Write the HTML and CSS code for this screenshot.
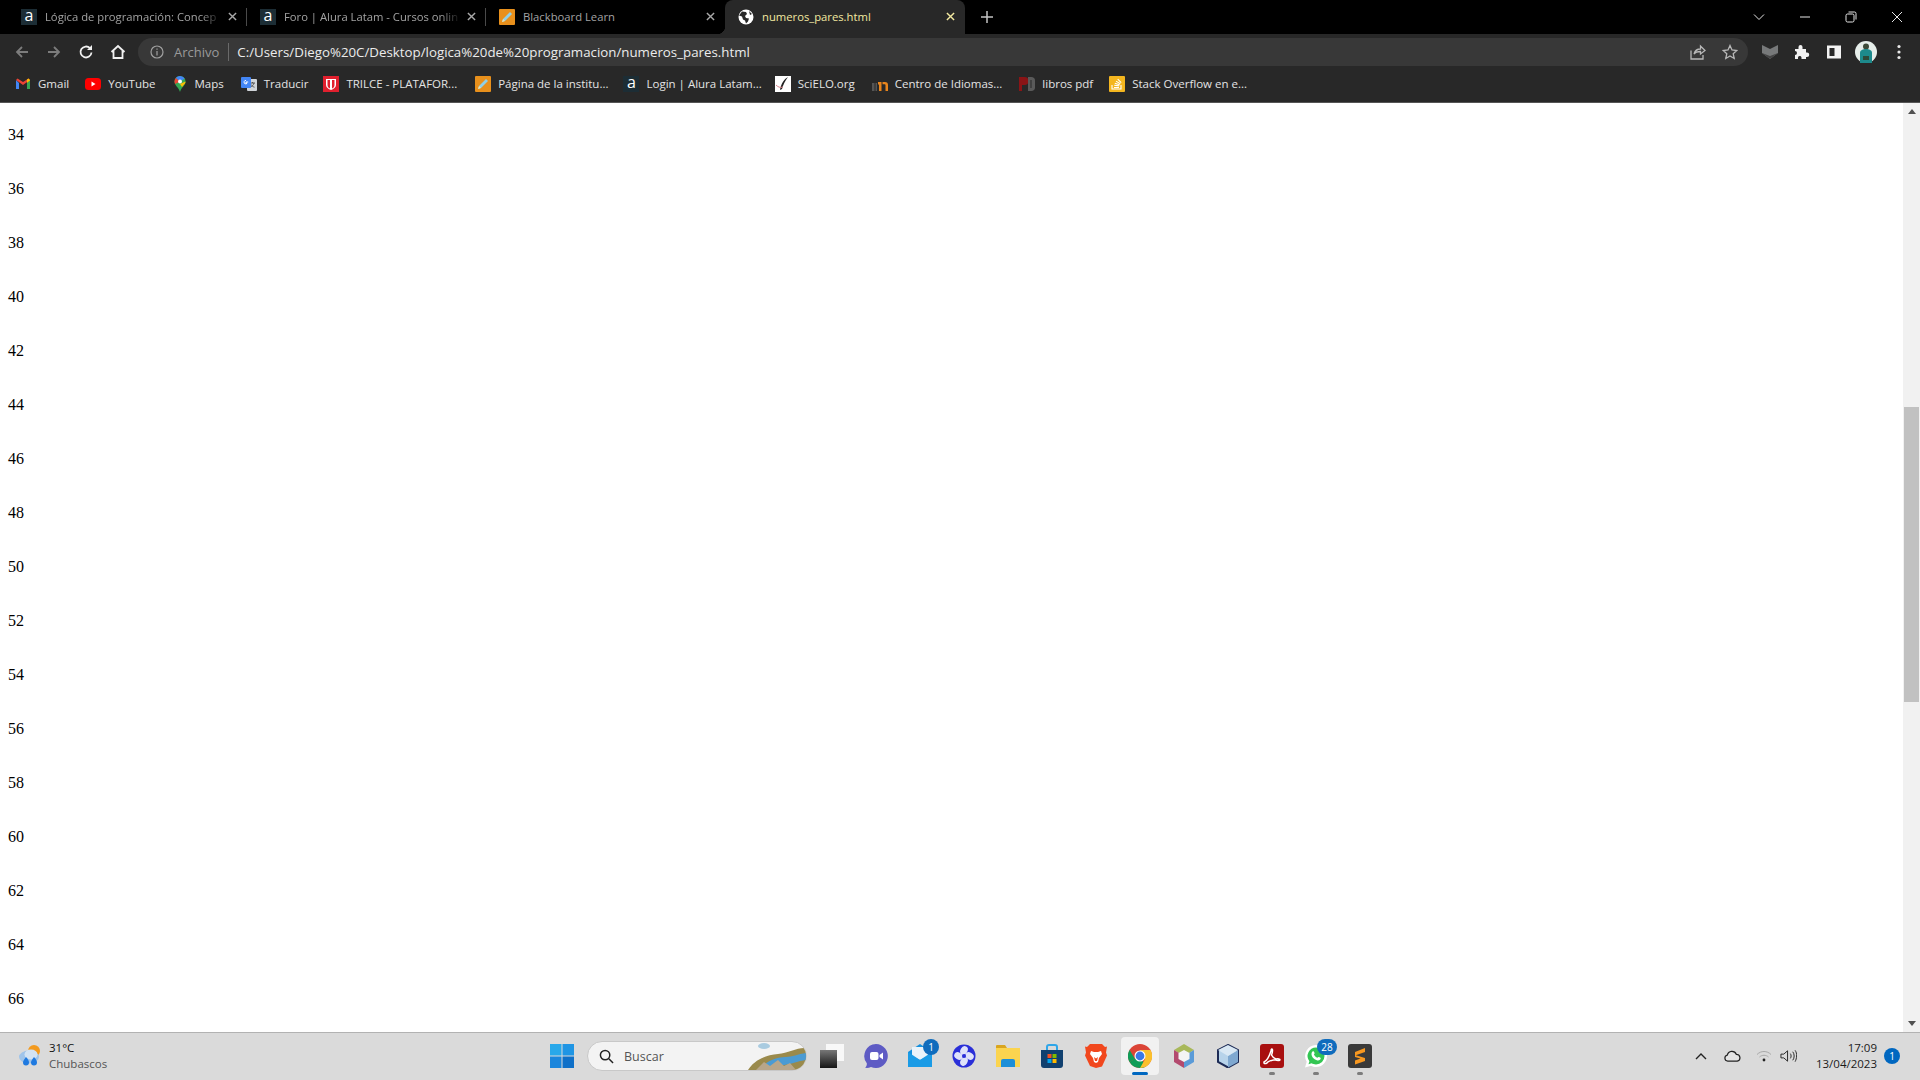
FILE: index.html
```html
<!DOCTYPE html>
<html lang="es">
<head>
    <meta charset="UTF-8">
    <title>numeros_pares.html</title>
    <link rel="stylesheet" href="styles.css">
</head>
<body>

<!-- Barra de pestañas -->
<div class="tabstrip">
    <div class="tab">
        <span class="fav fav-alura">a</span>
        <span class="tab-title">Lógica de programación: Concep</span>
        <svg class="tab-close" viewBox="0 0 10 10"><path d="M1 1l8 8M9 1l-8 8"/></svg>
    </div>
    <div class="tab">
        <span class="fav fav-alura">a</span>
        <span class="tab-title">Foro | Alura Latam - Cursos onlin</span>
        <svg class="tab-close" viewBox="0 0 10 10"><path d="M1 1l8 8M9 1l-8 8"/></svg>
    </div>
    <div class="tab tab-last">
        <svg class="fav" viewBox="0 0 16 16"><rect width="16" height="16" rx="1" fill="#e8901c"/><path d="M3 13l1-3 7-7 2 2-7 7z" fill="#8fd0e8"/><path d="M3 13l1-3 2 2z" fill="#f4e3b0"/></svg>
        <span class="tab-title">Blackboard Learn</span>
        <svg class="tab-close" viewBox="0 0 10 10"><path d="M1 1l8 8M9 1l-8 8"/></svg>
    </div>
    <div class="tab tab-active">
        <svg class="fav" viewBox="0 0 16 16"><circle cx="8" cy="8" r="7.5" fill="#fff"/><path d="M4 2.500l4 .5 1 2-2 2 1 2 3 .5-1 3-2 2-1-3-2-1-1-3-3-1zM11 2l3 3-2 1z" fill="#282828"/></svg>
        <span class="tab-title">numeros_pares.html</span>
        <svg class="tab-close" viewBox="0 0 10 10"><path d="M1 1l8 8M9 1l-8 8"/></svg>
    </div>
    <svg class="new-tab" viewBox="0 0 12 12"><path d="M6 0v12M0 6h12"/></svg>
    <div class="window-btns">
        <svg viewBox="0 0 12 12"><path d="M1 3.500l5 5 5-5"/></svg>
        <svg viewBox="0 0 12 12"><path d="M1 6h10"/></svg>
        <svg viewBox="0 0 12 12"><rect x="1" y="3" width="8" height="8" rx="1.500"/><path d="M3.500 1H9.500a1.500 1.500 0 0 1 1.500 1.500V8.500"/></svg>
        <svg viewBox="0 0 12 12"><path d="M1 1l10 10M11 1L1 11"/></svg>
    </div>
</div>

<!-- Barra de herramientas -->
<div class="toolbar">
    <svg class="tool tool-off" viewBox="0 0 16 16"><path d="M14 8H3M8 3L3 8l5 5"/></svg>
    <svg class="tool tool-off" viewBox="0 0 16 16"><path d="M2 8h11M8 3l5 5-5 5"/></svg>
    <svg class="tool" viewBox="0 0 16 16"><path d="M13.500 8.500a5.500 5.500 0 1 1-1.500-4.300" /><path class="solid" d="M14 1v5H9z"/></svg>
    <svg class="tool" viewBox="0 0 16 16"><path d="M1.500 8L8 2l6.500 6M3.500 7v7h9V7"/></svg>
    <div class="omnibox">
        <svg class="info" viewBox="0 0 14 14"><circle cx="7" cy="7" r="6"/><path d="M7 6v4.500M7 3.500v1.300"/></svg>
        <span class="scheme">Archivo</span>
        <span class="omni-sep"></span>
        <span class="url">C:/Users/Diego%20C/Desktop/logica%20de%20programacion/numeros_pares.html</span>
        <svg class="omni-icon" viewBox="0 0 16 16"><path d="M1 6.500V15h12v-4M4 10c1-3.500 3.500-5 6.500-5V2L15 6.500 10.500 10V7.500C8 7.500 5.500 8 4 10z"/></svg>
        <svg class="omni-icon" viewBox="0 0 16 16"><path d="M8 1.500l2 4.500 4.800.5-3.600 3.200 1 4.800L8 12l-4.200 2.500 1-4.800L1.200 6.500 6 6z"/></svg>
    </div>
    <svg class="ext ext-shield" viewBox="0 0 16 16"><path d="M0 1l8 4 8-4v8l-8 6-8-6z" fill="#77797a"/><path d="M0 9l8 6 8-6-8 3z" fill="#444"/></svg>
    <svg class="ext" viewBox="0 0 16 16"><path d="M1 5h3.500V3a2 2 0 0 1 4 0v2H12v3.500h1a2.200 2.200 0 0 1 0 4.500h-1v2H7.500v-1.500a1.800 1.800 0 0 0-3.500 0V15H1v-4a2 2 0 0 0 0-4z" fill="#f2f2f2"/></svg>
    <svg class="ext" viewBox="0 0 16 16"><path fill-rule="evenodd" d="M1 1.500h14v13H1zM3.500 4v8h5V4z" fill="#f2f2f2"/></svg>
    <svg class="avatar" viewBox="0 0 22 22"><circle cx="11" cy="11" r="11" fill="#e6eeea"/><circle cx="11" cy="5.500" r="3" fill="#3e4b3a"/><path d="M5 22V12c0-3 3-4 6-4s6 1 6 4v10z" fill="#1d8a8c"/><path d="M8 15h6v4H8z" fill="#2d4a3a"/></svg>
    <svg class="dots" viewBox="0 0 4 16"><circle cx="2" cy="2.500" r="1.600"/><circle cx="2" cy="8" r="1.600"/><circle cx="2" cy="13.500" r="1.600"/></svg>
</div>

<!-- Marcadores -->
<div class="bookmarks">
    <div class="bm bm-gmail">
        <svg viewBox="0 0 16 16"><path d="M1 4v9h3V7z" fill="#4285f4"/><path d="M12 7v6h3V4z" fill="#34a853"/><path d="M1 4l7 5 7-5-1.500-1.500L8 6 2.500 2.500z" fill="#ea4335"/><path d="M12 3.500V7l3-2.500V4l-1.500-1.500z" fill="#fbbc04"/></svg>
        <span>Gmail</span>
    </div>
    <div class="bm bm-yt">
        <svg viewBox="0 0 16 16"><rect y="2" width="16" height="12" rx="3.500" fill="#f00"/><path d="M6.500 5.500v5l4-2.500z" fill="#fff"/></svg>
        <span>YouTube</span>
    </div>
    <div class="bm bm-maps">
        <svg viewBox="0 0 16 16"><path d="M8 0a5.500 5.500 0 0 0-5.500 5.500C2.500 9.500 6.500 11 8 16c1.500-5 5.500-6.500 5.500-10.500A5.500 5.500 0 0 0 8 0z" fill="#34a853"/><path d="M8 0a5.500 5.500 0 0 0-4.200 2L8 5.500l4.700-3A5.500 5.500 0 0 0 8 0z" fill="#4285f4"/><path d="M3.800 2a5.500 5.500 0 0 0-1.300 3.500c0 1 .3 1.800.6 2.500L8 5.500z" fill="#ea4335"/><path d="M10 11l3-3.500c.3-.6.500-1.300.5-2L8 8z" fill="#fbbc04"/><circle cx="8" cy="5.500" r="2" fill="#fff"/></svg>
        <span>Maps</span>
    </div>
    <div class="bm bm-trad">
        <svg viewBox="0 0 16 16"><rect x="6" y="3" width="10" height="12" rx="1" fill="#cfd3d8"/><path d="M9 7h5M11.500 6v1M13 7c-.5 2-2 3.500-3.500 4M10 8.500c.7 1.300 2 2.300 3.500 2.700" stroke="#555" fill="none"/><rect y="1" width="10" height="11" rx="1" fill="#4285f4"/><path d="M7.200 6H5v1.200h1.100A1.700 1.700 0 1 1 5 4.500" stroke="#fff" stroke-width="1" fill="none"/></svg>
        <span>Traducir</span>
    </div>
    <div class="bm bm-trilce">
        <svg viewBox="0 0 16 16"><rect width="16" height="16" fill="#e1202e"/><path d="M3 3h10v6c0 2.500-2.500 4-5 5-2.500-1-5-2.500-5-5z" fill="#fff"/><path d="M7 4v8.500C5.500 12 4.500 11 4.500 9V4zM9 4v8.500c1.500-.5 2.500-1.500 2.500-3.500V4z" fill="#e1202e"/></svg>
        <span>TRILCE - PLATAFOR...</span>
    </div>
    <div class="bm bm-inst">
        <svg viewBox="0 0 16 16"><rect width="16" height="16" rx="1" fill="#e8901c"/><path d="M3 13l1-3 7-7 2 2-7 7z" fill="#8fd0e8"/><path d="M3 13l1-3 2 2z" fill="#f4e3b0"/></svg>
        <span>Página de la institu...</span>
    </div>
    <div class="bm bm-login">
        <span class="fav fav-alura">a</span>
        <span>Login | Alura Latam...</span>
    </div>
    <div class="bm bm-scielo">
        <svg viewBox="0 0 16 16"><rect width="16" height="16" fill="#fff"/><path d="M13 1C9 3 6 8 5 14l2-1c1-4 3-8 6-12z" fill="#222"/><path d="M1 9c2 2 4 3 7 2" stroke="#d8828a" fill="none"/></svg>
        <span>SciELO.org</span>
    </div>
    <div class="bm bm-centro">
        <svg viewBox="0 0 16 16"><path d="M6 6h3.500v9H7V8.500H6zM10.500 6H13a3 3 0 0 1 3 3v6h-2.500V9a.8.800 0 0 0-.8-.8h-2.200z" fill="#e8841c"/><path d="M0 7h2.500v8H0zM3.500 7H5v8H3.500z" fill="#555"/></svg>
        <span>Centro de Idiomas...</span>
    </div>
    <div class="bm bm-libros">
        <svg viewBox="0 0 16 16"><path d="M0 1h5.500a3 3 0 0 1 0 8H3v6H0z" fill="#8a1416"/><path d="M9 1h3.500c2 0 3.500 1.500 3.500 3.500v7c0 2-1.500 3.500-3.500 3.500H9z" fill="#5a5a5a"/><path d="M11.500 4h1v8h-1z" fill="#282828"/></svg>
        <span>libros pdf</span>
    </div>
    <div class="bm bm-stack">
        <svg viewBox="0 0 16 16"><rect width="16" height="16" rx="1" fill="#f4b61f"/><path d="M3 9v4h9V9M5 11.500h5M5.200 9.300l5 .6M5.800 7.300l4.800 1.400M7 5.100l4.300 2.600M8.700 3.200l3.500 3.500" stroke="#fff" fill="none" stroke-width="1.100"/></svg>
        <span>Stack Overflow en e...</span>
    </div>
</div>

<!-- Contenido de la página -->
<div class="page">
    <div class="numeros">
        <div>34</div>
        <div>36</div>
        <div>38</div>
        <div>40</div>
        <div>42</div>
        <div>44</div>
        <div>46</div>
        <div>48</div>
        <div>50</div>
        <div>52</div>
        <div>54</div>
        <div>56</div>
        <div>58</div>
        <div>60</div>
        <div>62</div>
        <div>64</div>
        <div>66</div>
    </div>
    <div class="scrollbar">
        <svg class="sb-arrow" viewBox="0 0 8 5"><path d="M4 0l4 5H0z"/></svg>
        <div class="sb-track"><div class="sb-thumb"></div></div>
        <svg class="sb-arrow" viewBox="0 0 8 5"><path d="M0 0h8L4 5z"/></svg>
    </div>
</div>

<!-- Barra de tareas -->
<div class="taskbar">
    <div class="weather">
        <svg viewBox="0 0 22 24"><circle cx="15" cy="7" r="6" fill="#f39a1e"/><ellipse cx="10" cy="13" rx="10" ry="6.500" fill="#9fc4ea"/><ellipse cx="12" cy="10.500" rx="6.500" ry="5" fill="#d3e3f3"/><path d="M7 13c2 2 3 4 3 5.500a3 3 0 0 1-6 0C4 17 5.500 15 7 13zM15 13c2 2 3 4 3 5.500a3 3 0 0 1-6 0c0-1.500 1.500-3.500 3-5.500z" fill="#1f7ae0"/></svg>
        <div class="weather-text">
            <div class="temp">31°C</div>
            <div class="cond">Chubascos</div>
        </div>
    </div>
    <div class="task-icons">
        <div class="slot">
            <svg viewBox="0 0 24 24"><path d="M0 0h11.500v11.500H0z" fill="#28a8ea"/><path d="M12.500 0H24v11.500H12.500z" fill="#1f95e4"/><path d="M0 12.500h11.500V24H0z" fill="#1b86dc"/><path d="M12.500 12.500H24V24H12.500z" fill="#0f70c8"/></svg>
        </div>
        <div class="search">
            <svg class="search-icon" viewBox="0 0 16 16"><circle cx="6.500" cy="6.500" r="5"/><path d="M10.500 10.500L15 15"/></svg>
            <span>Buscar</span>
            <svg class="search-art" viewBox="0 0 58 30"><ellipse cx="16" cy="6" rx="6" ry="3" fill="#a9cbe0"/><path d="M0 30C6 20 18 15 30 14c10-1 20-7 28-6v22z" fill="#9a8a4c"/><path d="M14 28c4-7 14-11 24-11 6 0 12-3 20-4v7c-8 1-14 4-22 5z" fill="#4b9bd3"/><path d="M8 30l8-8 6 4 8-6 6 6 6-3 6 7z" fill="#b8a68a"/></svg>
        </div>
        <div class="slot slot-taskview">
            <svg viewBox="0 0 24 24"><rect x="6" y="0" width="18" height="17" fill="#f8f8f8"/><rect x="6" y="6" width="11" height="11" fill="#c8c8c8"/><path d="M0 6h17v18H0z" fill="url(#tv)"/><defs><linearGradient id="tv" x1="0" y1="0" x2="0" y2="1"><stop offset="0" stop-color="#777"/><stop offset="1" stop-color="#151515"/></linearGradient></defs></svg>
        </div>
        <div class="slot">
            <svg viewBox="0 0 24 24"><path d="M12 0a12 12 0 1 1-5 23c-2 1-4 1-6 .8 1.500-1.500 2-3 1.800-4.500A12 12 0 0 1 12 0z" fill="#5e5bc4"/><rect x="6" y="8" width="8.500" height="8" rx="2" fill="#fff"/><path d="M15.500 11l3.500-2.500v7L15.500 13z" fill="#fff"/></svg>
        </div>
        <div class="slot">
            <svg viewBox="0 0 24 24"><path d="M0 8L12 0l12 8v15H0z" fill="#1590de"/><path d="M4 3h16v9l-8 4-8-4z" fill="#e9f3fa"/><path d="M0 8l12 8 12-8v15H0z" fill="#1a9be6"/></svg>
            <span class="badge">1</span>
        </div>
        <div class="slot">
            <svg viewBox="0 0 24 24"><circle cx="12" cy="12" r="11.500" fill="#2a2fd8"/><g fill="#dfe2fa"><ellipse cx="12" cy="6.500" rx="3.500" ry="4.500" transform="rotate(30 12 6.500)"/><ellipse cx="17.500" cy="12" rx="4.500" ry="3.500" transform="rotate(30 17.500 12)"/><ellipse cx="12" cy="17.500" rx="3.500" ry="4.500" transform="rotate(30 12 17.500)"/><ellipse cx="6.500" cy="12" rx="4.500" ry="3.500" transform="rotate(30 6.500 12)"/></g><circle cx="12" cy="12" r="2" fill="#2a2fd8"/></svg>
        </div>
        <div class="slot">
            <svg viewBox="0 0 24 24"><path d="M0 2a1 1 0 0 1 1-1h8l2 3h-11z" fill="#d9a520"/><path d="M0 4h24v19H0z" fill="#fbd44f"/><path d="M7 15h10a2 2 0 0 1 2 2v6H5v-6a2 2 0 0 1 2-2z" fill="#1d8fd8"/></svg>
        </div>
        <div class="slot">
            <svg viewBox="0 0 24 24"><path d="M1 6h22v15a3 3 0 0 1-3 3H4a3 3 0 0 1-3-3z" fill="#10406f"/><path d="M7 6V3a2 2 0 0 1 2-2h6a2 2 0 0 1 2 2v3" stroke="#30a6e8" stroke-width="2" fill="none"/><path d="M7.500 10h4v4h-4z" fill="#f25022"/><path d="M12.500 10h4v4h-4z" fill="#7fba00"/><path d="M7.500 15h4v4h-4z" fill="#00a4ef"/><path d="M12.500 15h4v4h-4z" fill="#ffb900"/></svg>
        </div>
        <div class="slot">
            <svg viewBox="0 0 24 24"><path d="M6 0h12l3 3 2-.5-1 6 1 3-5 11-6 1.500L6 22 1 11.500l1-3-1-6 2 .5z" fill="#f1471d"/><path d="M7 7l3 1h4l3-1 1 3-3 4-1 4-2 1-2-1-1-4-3-4z" fill="#fff"/><path d="M10 13l2 1.500 2-1.500-1 4h-2z" fill="#f1471d"/></svg>
        </div>
        <div class="slot slot-active">
            <svg viewBox="0 0 24 24"><circle cx="12" cy="12" r="12" fill="#db4437"/><path d="M12 12L1.600 18A12 12 0 0 0 12 24c2 0 4-.5 5.500-1.500z" fill="#0f9d58"/><path d="M12 6h10.500a12 12 0 0 1-10.500 18l5.200-9z" fill="#fbc02d"/><path d="M1.600 18A12 12 0 0 1 1.600 6L7 15z" fill="#0f9d58"/><circle cx="12" cy="12" r="5.500" fill="#fff"/><circle cx="12" cy="12" r="4.400" fill="#3b78e7"/></svg>
        </div>
        <div class="slot">
            <svg viewBox="0 0 24 24"><path d="M12 0l10 6-10 6L2 6z" fill="#a8b85a"/><path d="M2 6l10 6v12L2 18z" fill="#b34a6e"/><path d="M22 6L12 12v12l10-6z" fill="#5a9bd8"/><path d="M12 6l5.500 3v6L12 18l-5.500-3V9z" fill="#f4f4f4"/></svg>
        </div>
        <div class="slot">
            <svg viewBox="0 0 24 24"><path d="M12 1l10 5v12l-10 5.500L2 18V6z" fill="#b7d3ea" stroke="#1c2a55" stroke-width="2"/><path d="M12 12l10-6v12l-10 5.500z" fill="#7fa8d0"/><path d="M12 12L2 6l10-5 10 5z" fill="#d9e8f4"/></svg>
        </div>
        <div class="slot slot-open">
            <svg viewBox="0 0 24 24"><rect width="24" height="24" rx="3" fill="#a80f0f"/><path d="M4 18c3-1 5-5 7-11 0-2 1-3 1.500-1 .2 2-.2 3-1 5 1 2 3 3.500 4.500 4 2-.3 4-.2 4 .8s-3 1-5 0c-2 .2-5 1-7 2-1 1.500-3 2.500-4 1.200z" fill="none" stroke="#fff" stroke-width="1.500"/></svg>
        </div>
        <div class="slot slot-open">
            <svg viewBox="0 0 24 24"><path d="M12 1a11 11 0 0 1 0 22c-2 0-3.500-.4-5-1.200L1 23.500l1.700-5.800A11 11 0 0 1 12 1z" fill="#fff"/><path d="M12 3.500a8.500 8.500 0 0 1 0 17c-1.700 0-3.200-.5-4.500-1.200l-3 .9.900-3A8.500 8.500 0 0 1 12 3.500z" fill="#33c653"/><path d="M8.500 7.500c1-.7 1.500 0 2 1.300.3.700 0 1-.6 1.700.7 1.500 2 2.700 3.500 3.300.7-.6 1-1.100 1.700-.8 1.300.6 2 1 1.500 2-.6 1.300-2.200 1.800-3.800 1.200-3-1-5.500-3.700-5.300-6.500 0-.8.400-1.700 1-2.200z" fill="#fff"/></svg>
            <span class="badge badge-wide">28</span>
        </div>
        <div class="slot slot-open">
            <svg viewBox="0 0 24 24"><rect width="24" height="24" rx="3" fill="#3a3a3a"/><path d="M17 4v4L7 11.500V8zM7 11l10 3v3L7 20.500v-4l5.500-2L7 13z" fill="#f89820"/></svg>
        </div>
    </div>
    <div class="tray">
        <svg class="tray-chevron" viewBox="0 0 12 8"><path d="M1 7l5-5 5 5"/></svg>
        <svg class="tray-cloud" viewBox="0 0 18 12"><path d="M4 11.500a3.300 3.300 0 0 1-.5-6.500 5 5 0 0 1 9.500-.8 3.700 3.700 0 0 1 1 7.300z"/></svg>
        <svg class="tray-wifi" viewBox="0 0 16 12"><path class="wifi-off" d="M1 4.500c4-4 10-4 14 0M3.500 7c2.500-2.300 6.500-2.300 9 0"/><circle cx="8" cy="10" r="1.400"/></svg>
        <svg class="tray-sound" viewBox="0 0 18 14"><path d="M1 5v4h3l4 3.500v-11L4 5zM11 4.500c1 1.500 1 3.500 0 5M13.500 2.500c2 2.500 2 6.500 0 9M16 1c2.500 3.500 1.800 8.500 0 12"/></svg>
        <div class="clock">
            <div>17:09</div>
            <div>13/04/2023</div>
        </div>
        <span class="notif">1</span>
    </div>
</div>

</body>
</html>
```

FILE: styles.css
```css
* {
    box-sizing: border-box;
}
body {
    margin: 0;
    height: 100vh;
    overflow: hidden;
    display: flex;
    flex-direction: column;
    font-family: "Open Sans", "Noto Sans", sans-serif;
    background-color: #fff;
}

/* Pestañas */
.tabstrip {
    height: 34px;
    flex: none;
    display: flex;
    align-items: center;
    padding-left: 8px;
    background-color: #000;
}
.tab {
    position: relative;
    width: 239px;
    height: 34px;
    display: flex;
    align-items: center;
    padding: 0 10px 1px 13px;
    color: #a3a3a3;
    font-size: 11.250px;
}
.tab::after {
    content: "";
    position: absolute;
    right: 0;
    top: 8px;
    height: 18px;
    width: 1px;
    background-color: #4a4a4a;
}
.tab-last::after, .tab-active::after {
    display: none;
}
.tab-active {
    width: 240px;
    height: 34px;
    background-color: #282828;
    border-radius: 8px 8px 0 0;
    color: #f3e9a0;
}
.tab-active::before {
    content: "";
    position: absolute;
    left: -8px;
    bottom: 0;
    width: 8px;
    height: 8px;
    background: radial-gradient(circle at 0 0, #000 8px, #282828 8.500px);
}
.fav {
    width: 16px;
    height: 16px;
    flex: none;
    margin-right: 8px;
}
.fav-alura {
    background-color: #1c2d35;
    color: #fff;
    font: 16px/13px "Open Sans", sans-serif;
    text-align: center;
}
.tab-title {
    flex: 1;
    white-space: nowrap;
    overflow: hidden;
    -webkit-mask-image: linear-gradient(to right, #000 88%, transparent);
    mask-image: linear-gradient(to right, #000 88%, transparent);
}
.tab-active .tab-title, .tab-last .tab-title {
    -webkit-mask-image: none;
    mask-image: none;
}
.tab-close {
    width: 9px;
    height: 9px;
    flex: none;
    margin-left: 6px;
    fill: none;
    stroke: #a8a8a8;
    stroke-width: 1.600;
}
.tab-active .tab-close {
    stroke: #f3e9a0;
}
.new-tab {
    width: 12px;
    height: 12px;
    margin-left: 16px;
    fill: none;
    stroke: #c4c4c4;
    stroke-width: 1.500;
}
.window-btns {
    margin-left: auto;
    display: flex;
    gap: 34px;
    padding-right: 17px;
    align-items: center;
}
.window-btns svg {
    width: 12px;
    height: 12px;
    fill: none;
    stroke: #e6e6e6;
    stroke-width: 1;
}

/* Barra de herramientas */
.toolbar {
    height: 34px;
    flex: none;
    display: flex;
    align-items: center;
    padding: 2px 0 0 14px;
    background-color: #282828;
}
.tool {
    width: 16px;
    height: 16px;
    flex: none;
    margin-right: 16px;
    fill: none;
    stroke: #f0f0f0;
    stroke-width: 1.800;
}
.tool-off {
    stroke: #7c7c7c;
}
.tool .solid {
    fill: #f0f0f0;
    stroke: none;
}
.omnibox {
    width: 1610px;
    height: 28px;
    margin-left: -4px;
    display: flex;
    align-items: center;
    padding-left: 12px;
    border-radius: 14px;
    background-color: #383838;
}
.info {
    width: 14px;
    height: 14px;
    flex: none;
    fill: none;
    stroke: #a0a0a0;
    stroke-width: 1.200;
}
.scheme {
    margin-left: 10px;
    color: #9a9a9a;
    font-size: 13px;
}
.omni-sep {
    width: 1px;
    height: 18px;
    margin: 0 8px 0 9px;
    background-color: #6a6a6a;
}
.url {
    color: #ececec;
    font-size: 13.300px;
    white-space: nowrap;
}
.omni-icon {
    width: 16px;
    height: 16px;
    flex: none;
    fill: none;
    stroke: #b8b8b8;
    stroke-width: 1.300;
    margin-left: 16px;
}
.url + .omni-icon {
    margin-left: auto;
}
.omni-icon:last-child {
    margin-right: 10px;
}
.ext {
    width: 16px;
    height: 16px;
    flex: none;
    margin-left: 16px;
}
.ext-shield {
    margin-left: 14px;
}
.avatar {
    width: 22px;
    height: 22px;
    flex: none;
    margin-left: 13px;
}
.dots {
    width: 4px;
    height: 16px;
    flex: none;
    margin-left: 20px;
    fill: #e8e8e8;
}

/* Marcadores */
.bookmarks {
    height: 35px;
    flex: none;
    position: relative;
    display: flex;
    align-items: center;
    padding-bottom: 3px;
    background-color: #282828;
    border-bottom: 1px solid #555;
    color: #e4e4e4;
    font-size: 11.500px;
}
.bm {
    display: flex;
    align-items: center;
    white-space: nowrap;
}
.bm svg, .bm .fav {
    width: 16px;
    height: 16px;
    flex: none;
    margin-right: 7px;
}
.bm-gmail { margin-left: 15px; }
.bm-yt { margin-left: 16px; }
.bm-maps { margin-left: 16px; }
.bm-trad { margin-left: 17px; }
.bm-trilce { margin-left: 15px; }
.bm-inst { margin-left: 18px; }
.bm-login { margin-left: 15px; }
.bm-scielo { margin-left: 13px; }
.bm-centro { margin-left: 17px; }
.bm-libros { margin-left: 17px; }
.bm-stack { margin-left: 16px; }

/* Página */
.page {
    flex: 1;
    min-height: 0;
    display: flex;
    overflow: hidden;
    background-color: #fff;
}
.numeros {
    flex: 1;
    padding: 5px 0 0 8px;
    color: #000;
    font: 16px/54px "Liberation Serif", serif;
}
.scrollbar {
    width: 17px;
    flex: none;
    display: flex;
    flex-direction: column;
    align-items: center;
    background-color: #f1f1f1;
}
.sb-arrow {
    width: 8px;
    height: 5px;
    flex: none;
    margin: 6px 0;
    fill: #505050;
}
.sb-track {
    flex: 1;
    width: 100%;
}
.sb-thumb {
    height: 295px;
    margin: 287px 1px 0;
    background-color: #c1c1c1;
}

/* Barra de tareas */
.taskbar {
    height: 48px;
    flex: none;
    display: flex;
    align-items: center;
    padding-bottom: 1px;
    background-color: #dadada;
    border-top: 1px solid #b2b2b2;
}
.weather {
    width: 540px;
    flex: none;
    display: flex;
    align-items: center;
    padding-left: 19px;
}
.weather svg {
    width: 22px;
    height: 24px;
    flex: none;
    margin-right: 8px;
}
.weather-text {
    font-size: 11.500px;
    line-height: 16px;
    color: #111;
}
.cond {
    color: #555;
}
.task-icons {
    display: flex;
    align-items: center;
}
.slot {
    position: relative;
    width: 44px;
    height: 38px;
    flex: none;
    display: flex;
    align-items: center;
    justify-content: center;
}
.slot > svg {
    width: 24px;
    height: 24px;
}
.slot-active {
    margin: 0 3px;
    width: 38px;
    background-color: #f1f1f1;
    border-radius: 4px;
}
.slot-active::after {
    content: "";
    position: absolute;
    left: 11px;
    bottom: 0;
    width: 16px;
    height: 3px;
    border-radius: 2px;
    background-color: #0067c0;
}
.slot-open::after {
    content: "";
    position: absolute;
    left: 19px;
    bottom: 0;
    width: 6px;
    height: 3px;
    border-radius: 2px;
    background-color: #7c7c7c;
}
.slot-taskview {
    margin-left: 3px;
}
.badge {
    position: absolute;
    top: 2px;
    right: 3px;
    min-width: 16px;
    height: 16px;
    border-radius: 8px;
    background-color: #0f6cbd;
    color: #fff;
    font-size: 10px;
    line-height: 16px;
    text-align: center;
}
.badge-wide {
    min-width: 20px;
    right: 1px;
}
.search {
    position: relative;
    width: 220px;
    height: 30px;
    flex: none;
    margin-left: 3px;
    display: flex;
    align-items: center;
    padding-left: 11px;
    overflow: hidden;
    border-radius: 15px;
    background-color: #f3f3f3;
    border: 1px solid #c8c8c8;
    color: #555;
    font-size: 12.500px;
}
.search-icon {
    width: 15px;
    height: 15px;
    margin-right: 10px;
    fill: none;
    stroke: #222;
    stroke-width: 1.600;
}
.search-art {
    position: absolute;
    right: 0;
    bottom: 0;
    width: 58px;
    height: 30px;
}
.tray {
    margin-left: auto;
    display: flex;
    align-items: center;
    padding-right: 20px;
}
.tray-chevron {
    width: 12px;
    height: 8px;
    fill: none;
    stroke: #222;
    stroke-width: 1.400;
}
.tray-cloud {
    width: 17px;
    height: 12px;
    margin-left: 17px;
    fill: #e4e4e4;
    stroke: #222;
    stroke-width: 1.300;
}
.tray-wifi {
    width: 16px;
    height: 12px;
    margin-left: 15px;
    fill: #222;
    stroke: none;
}
.wifi-off {
    fill: none;
    stroke: #a8a8a8;
    stroke-width: 1;
}
.tray-sound {
    width: 17px;
    height: 14px;
    margin-left: 8px;
    fill: none;
    stroke: #222;
    stroke-width: 1;
}
.clock {
    margin-left: 19px;
    text-align: right;
    color: #1a1a1a;
    font-size: 11.500px;
    line-height: 16px;
}
.notif {
    width: 16px;
    height: 16px;
    margin-left: 7px;
    border-radius: 50%;
    background-color: #0067c0;
    color: #fff;
    font-size: 10px;
    line-height: 16px;
    text-align: center;
}
```
